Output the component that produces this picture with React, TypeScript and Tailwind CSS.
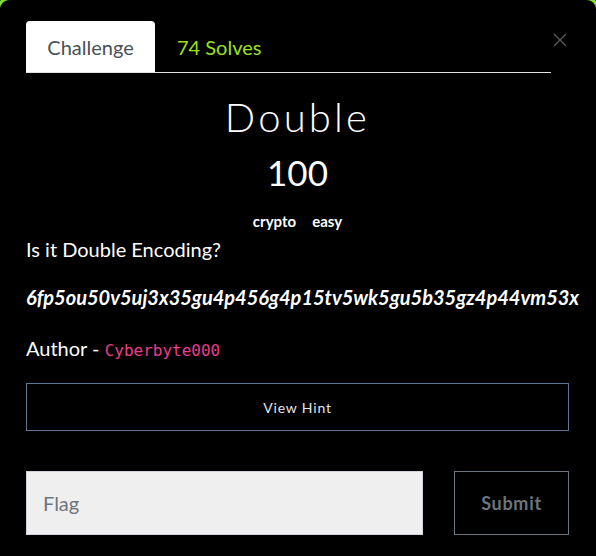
export default function App() {
  return (
    <div className="h-[556px] w-[596px] overflow-hidden bg-black font-['Lato','Noto_Sans',sans-serif]">
      <div className="-mx-[3px] -mt-[3px] h-[600px] rounded-[12px] border-[3px] border-[#86e02c] bg-black">
        <div className="pt-[21px] pr-[27px] pl-[26px]">
          <div className="flex items-start">
            <div className="flex flex-1 items-end border-b border-[#dee2e6]">
              <div className="flex h-[51px] w-[129px] items-center justify-center rounded-t-[4px] bg-white text-[20px] text-[#495057]">
                Challenge
              </div>
              <div className="flex h-[51px] items-center px-[22px] text-[20px] text-[#9be01c]">74 Solves</div>
            </div>
            <div className="w-[18px] pt-[12px] pl-[2px]">
              <svg width="14" height="14" viewBox="0 0 14 14">
                <path d="M1 1 L13 13 M13 1 L1 13" stroke="#5a5a5a" strokeWidth="1.3" />
              </svg>
            </div>
          </div>

          <div className="mt-[20px] text-center text-[40px] font-light leading-[48px] tracking-[0.08em] text-white">Double</div>
          <div className="mt-[10px] text-center text-[35px] font-normal leading-[42px] text-white">100</div>
          <div className="mt-[17px] flex justify-center gap-[16px] text-[15px] leading-[22px] font-bold text-white">
            <span>crypto</span>
            <span>easy</span>
          </div>

          <p className="mt-[2px] text-[20px] leading-[30px] text-white">Is it Double Encoding?</p>
          <p className="mt-[18px] text-[20px] leading-[30px] font-bold italic text-white">6fp5ou50v5uj3x35gu4p456g4p15tv5wk5gu5b35gz4p44vm53x</p>
          <p className="mt-[21px] text-[20px] leading-[30px] text-white">
            Author -{" "}
            <code className="font-['DejaVu_Sans_Mono',monospace] text-[16px] text-[#e83e8c]">Cyberbyte000</code>
          </p>

          <button className="mt-[17px] flex h-[48px] w-full items-center justify-center border border-[#5e7596] text-[14px] tracking-[0.06em] text-[#e5e5e5]">
            View Hint
          </button>

          <div className="mt-[40px] flex gap-[31px]">
            <div className="flex h-[64px] flex-1 items-center border border-[#ced4da] bg-[#efefef] px-[16px] text-[20px] text-[#6c757d]">
              Flag
            </div>
            <button className="flex h-[64px] w-[115px] items-center justify-center border border-[#6c757d] text-[18px] font-bold tracking-[0.04em] text-[#6c757d]">
              Submit
            </button>
          </div>
        </div>
      </div>
    </div>
  )
}
